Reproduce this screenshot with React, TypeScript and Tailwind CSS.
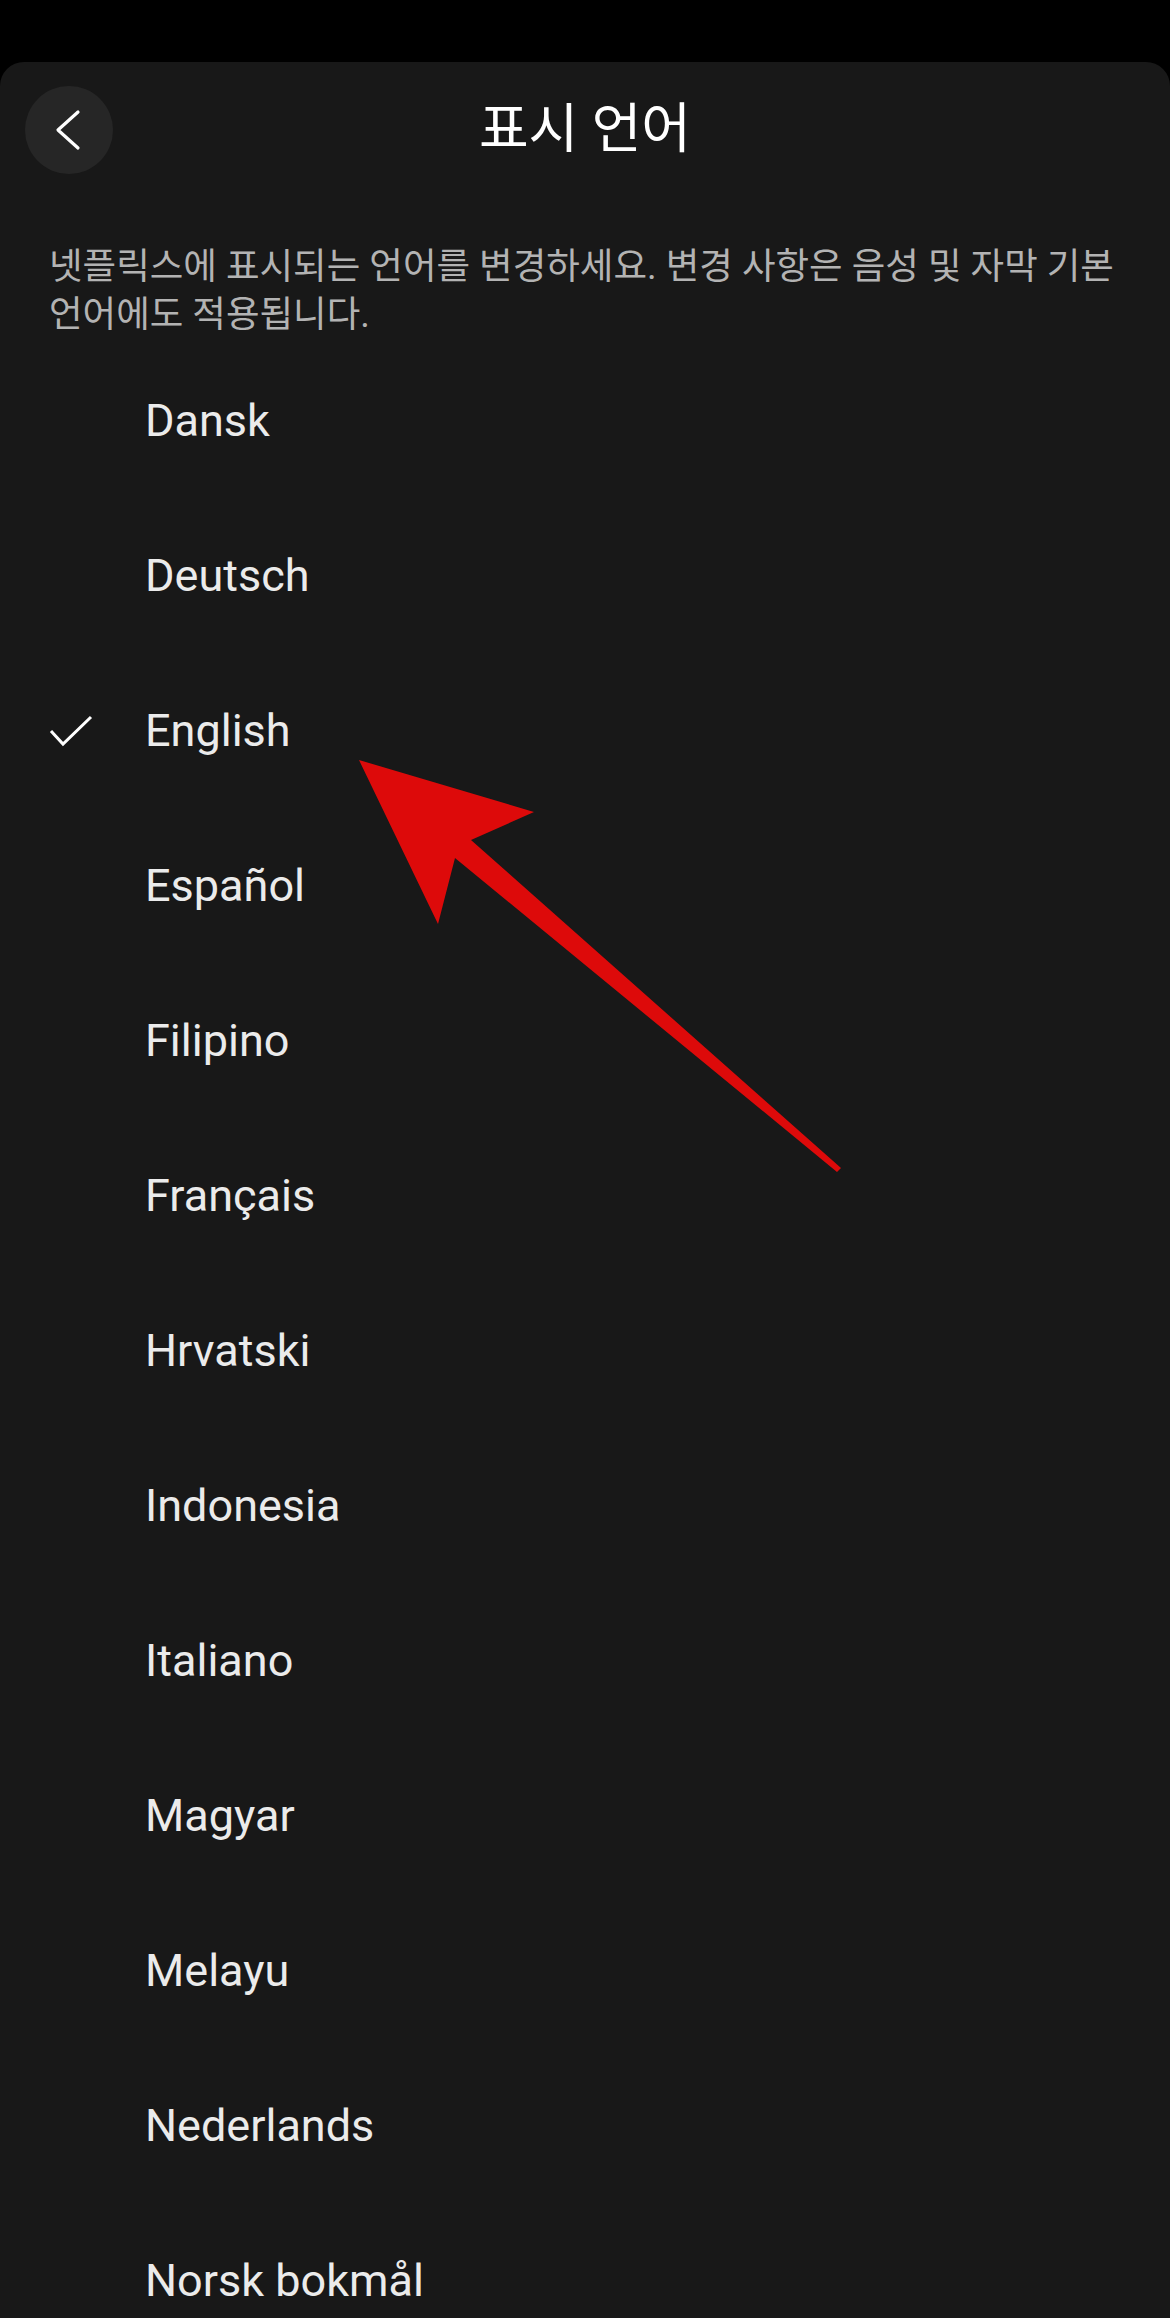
const languages = [
  'Dansk',
  'Deutsch',
  'English',
  'Español',
  'Filipino',
  'Français',
  'Hrvatski',
  'Indonesia',
  'Italiano',
  'Magyar',
  'Melayu',
  'Nederlands',
  'Norsk bokmål',
];

export default function App() {
  const selected = 'English';

  return (
    <div
      className="relative h-[2318px] overflow-hidden bg-black"
      style={{ fontFamily: "Roboto, 'Noto Sans CJK KR', sans-serif" }}
    >
      <div className="h-[62px]" />

      <div className="rounded-t-[24px] bg-[#181818] min-h-[2256px]">
        {/* Header */}
        <div className="relative flex items-center justify-center pt-6 px-6">
          <button className="absolute left-[25px] top-6 w-[88px] h-[88px] rounded-full bg-[#262626] flex items-center justify-center">
            <svg width="88" height="88" viewBox="0 0 88 88" fill="none">
              <path d="M53 26 L33 44 L53 62" stroke="#ffffff" strokeWidth="3.2" strokeLinecap="round" strokeLinejoin="round" />
            </svg>
          </button>
          <div className="h-[88px] flex items-center">
            <h1 className="text-[54px] text-white font-normal leading-none">표시 언어</h1>
          </div>
        </div>

        {/* Description */}
        <p className="mt-[69px] pl-[49px] pr-[30px] text-[36.5px] leading-[48px] text-[#b3b3b3]">
          넷플릭스에 표시되는 언어를 변경하세요. 변경 사항은 음성 및 자막 기본 언어에도 적용됩니다.
        </p>

        {/* Language list */}
        <ul className="mt-[4px]">
          {languages.map((lang) => (
            <li key={lang} className="h-[155px] flex items-center">
              <div className="w-[145px] flex items-center pl-[49px]">
                {lang === selected && (
                  <svg width="44" height="32" viewBox="0 0 44 32" fill="none">
                    <path d="M2 16 L14 29 L42 2" stroke="#ffffff" strokeWidth="3" />
                  </svg>
                )}
              </div>
              <span className="text-[45px] text-[#ebebeb]">{lang}</span>
            </li>
          ))}
        </ul>
      </div>

      {/* Red annotation arrow */}
      <svg
        className="absolute left-0 top-0 pointer-events-none"
        width="1170"
        height="2318"
        viewBox="0 0 1170 2318"
      >
        <polygon
          points="359,760 534,812 471,840 841,1168 837,1172 455,858 438,924"
          fill="#dd0a0a"
        />
      </svg>
    </div>
  );
}
